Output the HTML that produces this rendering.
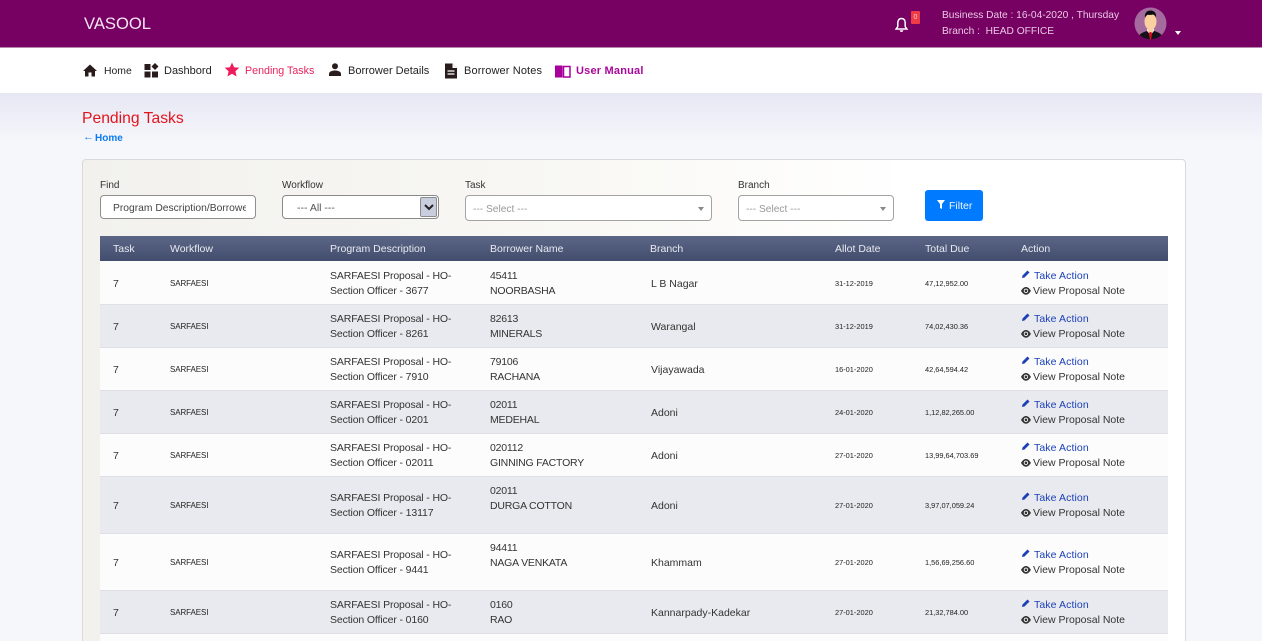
<!DOCTYPE html>
<html><head><meta charset="utf-8"><style>
*{box-sizing:border-box}
html,body{margin:0;padding:0;width:1262px;height:641px;overflow:hidden}
body{position:relative;font-family:"Liberation Sans",sans-serif;background:#f6f7fb;color:#333}
svg{overflow:visible}
.a{position:absolute;white-space:nowrap}
.t{font-size:10.5px;line-height:15px;color:#333;margin-top:1px}
.p{letter-spacing:-.13px}
.b{letter-spacing:-.2px}
.k{letter-spacing:.1px}
.n{margin-top:2px}
.c{margin-top:2px}
.s{font-size:8px;line-height:12px;color:#222;margin-top:1px;letter-spacing:-.1px}
.d{font-size:7.4px;letter-spacing:0}
.th{position:absolute;top:243px;font-size:10.5px;line-height:13px;color:#e8eaf0}
.nav{position:absolute;top:65px;font-size:11px;line-height:13px;color:#222;white-space:nowrap}
.row{position:absolute;left:100px;width:1068px;border-bottom:1px solid #dfe0e6}
.lab{position:absolute;top:180px;font-size:10px;line-height:12px;color:#333}
.box{position:absolute;background:#fff;border:1px solid #a3a3a3;border-radius:4px;font-size:10.5px}
.caret{position:absolute;width:0;height:0;border-left:3.5px solid transparent;border-right:3.5px solid transparent;border-top:4px solid #888}
</style></head><body>
<div class="a" style="left:0;top:0;width:1262px;height:48px;background:#770063;border-bottom:1px solid #b58aae"></div>
<div class="a" style="left:84px;top:14px;font-size:16.6px;line-height:19px;color:#f3e6f0">VASOOL</div>
<svg class="a" style="left:895px;top:17px" width="14" height="16" viewBox="0 0 14 16"><path d="M6.5 1.5C3.900 1.500 2.800 3.400 2.800 6v3.500L1.100 12h10.800l-1.700-2.500V6c0-2.600-1.100-4.500-3.700-4.500z" fill="none" stroke="#fff" stroke-width="1.500"/><path d="M4.700 13.200h3.600c0 1-.8 1.700-1.800 1.700s-1.800-.7-1.800-1.700z" fill="#fff"/></svg>
<div class="a" style="left:911px;top:11px;width:9px;height:13px;background:#ee3b45;border-radius:1px;color:#f8d0d0;font-size:7px;line-height:13px;text-align:center">0</div>
<div class="a" style="left:942px;top:8px;font-size:10.2px;line-height:15.5px;color:#e8c8e2">Business Date : 16-04-2020 , Thursday<br>Branch :&nbsp; HEAD OFFICE</div>
<svg class="a" style="left:1134px;top:7px" width="33" height="33" viewBox="0 0 33 33"><defs><clipPath id="c"><circle cx="16.500" cy="16.500" r="16"/></clipPath></defs><g clip-path="url(#c)"><rect width="33" height="33" fill="#a56b9e"/><path d="M3 33c1-6 6-8 10-9h7c4 1 9 3 10 9z" fill="#15101a"/><path d="M13 24l3.500 4 3.500-4v-2h-7z" fill="#f5f0f0"/><path d="M15.500 25h2l.5 2-1 6h-1l-1-6z" fill="#d8101f"/><ellipse cx="16.500" cy="14.500" rx="6" ry="8.500" fill="#fbd0a0"/><path d="M14 20h5v5h-5z" fill="#fbd0a0"/><path d="M11 11c-.8-5 2-7.500 5.500-7.500S22.800 6 22 11c-.5-2-1.500-3-3-3.500-2 .5-4 .5-5.500.3-1 .7-2 2-2.500 3.200z" fill="#0c0c10"/></g></svg>
<div class="caret" style="left:1175px;top:31px;border-top-color:#fff"></div>

<div class="a" style="left:0;top:48px;width:1262px;height:45px;background:#fff"></div>
<div class="a" style="left:0;top:93px;width:1262px;height:50px;background:linear-gradient(#e7e7f5,#f6f7fb)"></div>

<svg class="a" style="left:83px;top:64px" width="14" height="13" viewBox="0 0 14 13"><path d="M7 .5L0 7h2v5.500h3.500V8.500h3v4H12V7h2z" fill="#2a1c1c"/></svg>
<div class="nav" style="left:104px;font-size:10.4px">Home</div>
<svg class="a" style="left:144px;top:63px" width="15" height="15" viewBox="0 0 15 15" fill="#2a1c1c"><rect x="0.500" y="1" width="6" height="6"/><rect x="0.500" y="8.500" width="6" height="6"/><rect x="8" y="8.500" width="6" height="6"/><path d="M11 0l3.500 3.500L11 7 7.500 3.500z"/></svg>
<div class="nav" style="left:164px">Dashbord</div>
<svg class="a" style="left:224px;top:62px" width="16" height="15" viewBox="0 0 16 15"><path d="M8 .5l2.100 4.800 5.200.5-3.900 3.500 1.200 5.200L8 11.800l-4.600 2.700 1.200-5.200L.7 5.800l5.200-.5z" fill="#ee1c5c"/></svg>
<div class="nav" style="left:245px;color:#e9235f;font-size:10.7px">Pending Tasks</div>
<svg class="a" style="left:328px;top:63px" width="14" height="13" viewBox="0 0 14 13" fill="#2a1c1c"><circle cx="7" cy="3.300" r="3"/><path d="M1 13v-2c0-2.500 3-3.500 6-3.500s6 1 6 3.500v2z"/></svg>
<div class="nav" style="left:348px">Borrower Details</div>
<svg class="a" style="left:445px;top:63px" width="12" height="16" viewBox="0 0 12 16"><path d="M0 .5h7.500L12 5v10.500H0z" fill="#2a1c1c"/><path d="M7.500.5V5H12" fill="#fff"/><path d="M2.500 8h7M2.500 11h7" stroke="#fff" stroke-width="1.200"/></svg>
<div class="nav" style="left:464px;letter-spacing:.12px">Borrower Notes</div>
<svg class="a" style="left:555px;top:65px" width="16" height="13" viewBox="0 0 16 13"><path d="M0 .5h7.500v12H0z" fill="#a8009a"/><path d="M8.500 1.500h6.500v10.500H8.500z" fill="#fff" stroke="#a8009a" stroke-width="1.500"/></svg>
<div class="nav" style="left:576px;color:#a8089a;font-weight:bold;letter-spacing:.2px">User Manual</div>

<div class="a" style="left:82px;top:109px;font-size:15.7px;line-height:20px;color:#e3141c">Pending Tasks</div>
<div class="a" style="left:83px;top:131px;font-size:11px;line-height:12px;color:#1a7ee8">&#8592;</div>
<div class="a" style="left:95px;top:133px;font-size:10px;line-height:12px;color:#0a7cf0;font-weight:bold">Home</div>

<div class="a" style="left:82px;top:159px;width:1104px;height:490px;background:linear-gradient(90deg,#f2f1ed 0%,#f8f7f3 40%,#fff 75%,#fff 100%);border:1px solid #d9d9d9;border-radius:4px"></div>

<div class="lab" style="left:100px">Find</div>
<div class="box" style="left:100px;top:195px;width:156px;height:24px;border-color:#8f8f8f;overflow:hidden;padding-left:12px;line-height:25px;color:#444;white-space:nowrap;font-size:10.3px"><span style="display:block;width:133px;overflow:hidden">Program Description/Borrower</span></div>
<div class="lab" style="left:282px">Workflow</div>
<div class="box" style="left:282px;top:195px;width:157px;height:24px;border-color:#8a8a8a;padding-left:14px;line-height:24px;color:#555">--- All ---
<div class="a" style="left:137px;top:1px;width:17px;height:20px;background:#c9cede;border:1px solid #8c8c8c;border-radius:2px"></div>
<svg class="a" style="left:141px;top:8px" width="10" height="7" viewBox="0 0 10 7"><path d="M1 1l4 4 4-4" fill="none" stroke="#222" stroke-width="2"/></svg></div>
<div class="lab" style="left:465px">Task</div>
<div class="box" style="left:465px;top:195px;width:247px;height:26px;padding-left:7px;line-height:27px;color:#999;font-size:10.2px">--- Select ---<div class="caret" style="left:232px;top:11px"></div></div>
<div class="lab" style="left:738px">Branch</div>
<div class="box" style="left:738px;top:195px;width:156px;height:26px;padding-left:7px;line-height:27px;color:#999;font-size:10.2px">--- Select ---<div class="caret" style="left:141px;top:11px"></div></div>
<div class="a" style="left:925px;top:190px;width:58px;height:31px;background:#007bff;border-radius:3px"></div>
<svg class="a" style="left:937px;top:200px" width="8" height="9" viewBox="0 0 8 9"><path d="M0 0h8L5 4v5L3 8V4z" fill="#fff"/></svg>
<div class="a" style="left:949px;top:200px;font-size:10.5px;line-height:12px;color:#f0f6ff">Filter</div>

<div class="a" style="left:100px;top:236px;width:1068px;height:25px;background:linear-gradient(#5b6686,#434e6e)"></div>
<div class="th" style="left:113px">Task</div><div class="th" style="left:170px">Workflow</div><div class="th" style="left:330px">Program Description</div><div class="th" style="left:490px">Borrower Name</div><div class="th" style="left:650px">Branch</div><div class="th" style="left:835px">Allot Date</div><div class="th" style="left:925px">Total Due</div><div class="th" style="left:1021px">Action</div>

<svg width="0" height="0" style="position:absolute"><defs>
<g id="pen"><path d="M0 8l.5-2.500L5.500.5l2 2-5 5z" fill="#1a3fb8"/></g>
<g id="eye" transform="scale(1.100)"><path d="M0 3.500C1.500 1 3 0 4.500 0S7.500 1 9 3.500C7.500 6 6 7 4.500 7S1.500 6 0 3.500z" fill="#333"/><circle cx="4.500" cy="3.500" r="2" fill="#fff"/><circle cx="4.500" cy="3.500" r="1.200" fill="#333"/></g>
</defs></svg>

<div class="row" style="top:261px;height:44px;background:#fcfcfc"></div>
<div class="row" style="top:305px;height:43px;background:#e9eaef"></div>
<div class="row" style="top:348px;height:43px;background:#fcfcfc"></div>
<div class="row" style="top:391px;height:43px;background:#e9eaef"></div>
<div class="row" style="top:434px;height:43px;background:#fcfcfc"></div>
<div class="row" style="top:477px;height:57px;background:#e9eaef"></div>
<div class="row" style="top:534px;height:57px;background:#fcfcfc"></div>
<div class="row" style="top:591px;height:43px;background:#e9eaef"></div>
<div class="row" style="top:634px;height:7px;background:#fcfcfc;border:0"></div>

<!-- row 1 -->
<div class="a t n" style="left:113px;top:275px">7</div><div class="a s" style="left:170px;top:277px">SARFAESI</div>
<div class="a t p" style="left:330px;top:268px">SARFAESI Proposal - HO-<br>Section Officer - 3677</div>
<div class="a t b" style="left:490px;top:268px">45411<br>NOORBASHA</div>
<div class="a t c" style="left:651px;top:275px">L B Nagar</div><div class="a s d" style="left:835px;top:277px">31-12-2019</div><div class="a s d" style="left:925px;top:277px">47,12,952.00</div>
<svg class="a" style="left:1022px;top:270px" width="8" height="8"><use href="#pen"/></svg><div class="a t k" style="left:1034px;top:268px;color:#1a3fb8">Take Action</div>
<svg class="a" style="left:1021px;top:287px" width="9" height="7"><use href="#eye"/></svg><div class="a t" style="left:1033px;top:283px">View Proposal Note</div>
<!-- row 2 -->
<div class="a t n" style="left:113px;top:318px">7</div><div class="a s" style="left:170px;top:320px">SARFAESI</div>
<div class="a t p" style="left:330px;top:311px">SARFAESI Proposal - HO-<br>Section Officer - 8261</div>
<div class="a t b" style="left:490px;top:311px">82613<br>MINERALS</div>
<div class="a t c" style="left:651px;top:318px">Warangal</div><div class="a s d" style="left:835px;top:320px">31-12-2019</div><div class="a s d" style="left:925px;top:320px">74,02,430.36</div>
<svg class="a" style="left:1022px;top:313px" width="8" height="8"><use href="#pen"/></svg><div class="a t k" style="left:1034px;top:311px;color:#1a3fb8">Take Action</div>
<svg class="a" style="left:1021px;top:330px" width="9" height="7"><use href="#eye"/></svg><div class="a t" style="left:1033px;top:326px">View Proposal Note</div>
<!-- row 3 -->
<div class="a t n" style="left:113px;top:361px">7</div><div class="a s" style="left:170px;top:363px">SARFAESI</div>
<div class="a t p" style="left:330px;top:354px">SARFAESI Proposal - HO-<br>Section Officer - 7910</div>
<div class="a t b" style="left:490px;top:354px">79106<br>RACHANA</div>
<div class="a t c" style="left:651px;top:361px">Vijayawada</div><div class="a s d" style="left:835px;top:363px">16-01-2020</div><div class="a s d" style="left:925px;top:363px">42,64,594.42</div>
<svg class="a" style="left:1022px;top:356px" width="8" height="8"><use href="#pen"/></svg><div class="a t k" style="left:1034px;top:354px;color:#1a3fb8">Take Action</div>
<svg class="a" style="left:1021px;top:373px" width="9" height="7"><use href="#eye"/></svg><div class="a t" style="left:1033px;top:369px">View Proposal Note</div>
<!-- row 4 -->
<div class="a t n" style="left:113px;top:404px">7</div><div class="a s" style="left:170px;top:406px">SARFAESI</div>
<div class="a t p" style="left:330px;top:397px">SARFAESI Proposal - HO-<br>Section Officer - 0201</div>
<div class="a t b" style="left:490px;top:397px">02011<br>MEDEHAL</div>
<div class="a t c" style="left:651px;top:404px">Adoni</div><div class="a s d" style="left:835px;top:406px">24-01-2020</div><div class="a s d" style="left:925px;top:406px">1,12,82,265.00</div>
<svg class="a" style="left:1022px;top:399px" width="8" height="8"><use href="#pen"/></svg><div class="a t k" style="left:1034px;top:397px;color:#1a3fb8">Take Action</div>
<svg class="a" style="left:1021px;top:416px" width="9" height="7"><use href="#eye"/></svg><div class="a t" style="left:1033px;top:412px">View Proposal Note</div>
<!-- row 5 -->
<div class="a t n" style="left:113px;top:447px">7</div><div class="a s" style="left:170px;top:449px">SARFAESI</div>
<div class="a t p" style="left:330px;top:440px">SARFAESI Proposal - HO-<br>Section Officer - 02011</div>
<div class="a t b" style="left:490px;top:440px">020112<br>GINNING FACTORY</div>
<div class="a t c" style="left:651px;top:447px">Adoni</div><div class="a s d" style="left:835px;top:449px">27-01-2020</div><div class="a s d" style="left:925px;top:449px">13,99,64,703.69</div>
<svg class="a" style="left:1022px;top:442px" width="8" height="8"><use href="#pen"/></svg><div class="a t k" style="left:1034px;top:440px;color:#1a3fb8">Take Action</div>
<svg class="a" style="left:1021px;top:459px" width="9" height="7"><use href="#eye"/></svg><div class="a t" style="left:1033px;top:455px">View Proposal Note</div>
<!-- row 6 -->
<div class="a t n" style="left:113px;top:497px">7</div><div class="a s" style="left:170px;top:499px">SARFAESI</div>
<div class="a t p" style="left:330px;top:490px">SARFAESI Proposal - HO-<br>Section Officer - 13117</div>
<div class="a t b" style="left:490px;top:483px">02011<br>DURGA COTTON</div>
<div class="a t c" style="left:651px;top:497px">Adoni</div><div class="a s d" style="left:835px;top:499px">27-01-2020</div><div class="a s d" style="left:925px;top:499px">3,97,07,059.24</div>
<svg class="a" style="left:1022px;top:492px" width="8" height="8"><use href="#pen"/></svg><div class="a t k" style="left:1034px;top:490px;color:#1a3fb8">Take Action</div>
<svg class="a" style="left:1021px;top:509px" width="9" height="7"><use href="#eye"/></svg><div class="a t" style="left:1033px;top:505px">View Proposal Note</div>
<!-- row 7 -->
<div class="a t n" style="left:113px;top:554px">7</div><div class="a s" style="left:170px;top:556px">SARFAESI</div>
<div class="a t p" style="left:330px;top:547px">SARFAESI Proposal - HO-<br>Section Officer - 9441</div>
<div class="a t b" style="left:490px;top:540px">94411<br>NAGA VENKATA</div>
<div class="a t c" style="left:651px;top:554px">Khammam</div><div class="a s d" style="left:835px;top:556px">27-01-2020</div><div class="a s d" style="left:925px;top:556px">1,56,69,256.60</div>
<svg class="a" style="left:1022px;top:549px" width="8" height="8"><use href="#pen"/></svg><div class="a t k" style="left:1034px;top:547px;color:#1a3fb8">Take Action</div>
<svg class="a" style="left:1021px;top:566px" width="9" height="7"><use href="#eye"/></svg><div class="a t" style="left:1033px;top:562px">View Proposal Note</div>
<!-- row 8 -->
<div class="a t n" style="left:113px;top:604px">7</div><div class="a s" style="left:170px;top:606px">SARFAESI</div>
<div class="a t p" style="left:330px;top:597px">SARFAESI Proposal - HO-<br>Section Officer - 0160</div>
<div class="a t b" style="left:490px;top:597px">0160<br>RAO</div>
<div class="a t c" style="left:651px;top:604px">Kannarpady-Kadekar</div><div class="a s d" style="left:835px;top:606px">27-01-2020</div><div class="a s d" style="left:925px;top:606px">21,32,784.00</div>
<svg class="a" style="left:1022px;top:599px" width="8" height="8"><use href="#pen"/></svg><div class="a t k" style="left:1034px;top:597px;color:#1a3fb8">Take Action</div>
<svg class="a" style="left:1021px;top:616px" width="9" height="7"><use href="#eye"/></svg><div class="a t" style="left:1033px;top:612px">View Proposal Note</div>
</body></html>
